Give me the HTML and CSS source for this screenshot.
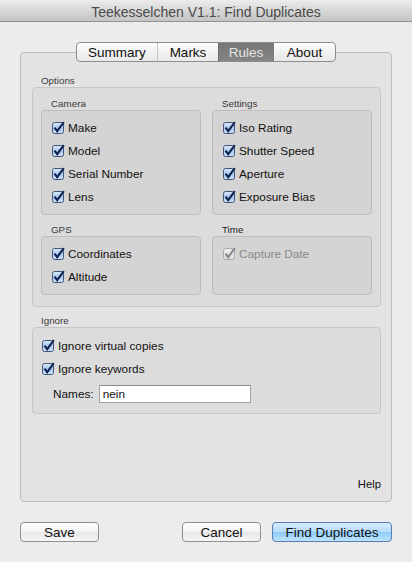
FILE: index.html
```html
<!DOCTYPE html>
<html>
<head>
<meta charset="utf-8">
<title>Teekesselchen V1.1: Find Duplicates</title>
<link rel="stylesheet" href="styles.css">
</head>
<body>
<svg class="defs" width="0" height="0">
  <defs>
    <linearGradient id="cbfill" x1="0" y1="0" x2="0" y2="1">
      <stop offset="0" stop-color="#dbe9f8"/>
      <stop offset="0.5" stop-color="#a9c9ef"/>
      <stop offset="1" stop-color="#cfe3fa"/>
    </linearGradient>
    <linearGradient id="cbdis" x1="0" y1="0" x2="0" y2="1">
      <stop offset="0" stop-color="#eeeeee"/>
      <stop offset="1" stop-color="#dcdcdc"/>
    </linearGradient>
  </defs>
</svg>
<div class="window">
  <div class="titlebar">Teekesselchen V1.1: Find Duplicates</div>

  <div class="tabs">
    <div class="seg-group">
      <div class="seg seg-summary">Summary</div>
      <div class="seg seg-marks">Marks</div>
      <div class="seg seg-rules active">Rules</div>
      <div class="seg seg-about">About</div>
    </div>
  </div>

  <div class="tabbox">
    <div class="label outer-label">Options</div>
    <div class="group options">
      <div class="grid">
        <div class="label inner-label">Camera</div>
        <div class="label inner-label">Settings</div>
        <div class="inner">
          <div class="row"><svg class="cb" viewBox="0 0 14 14"><rect x="0.5" y="1.5" width="11" height="11" rx="2" fill="url(#cbfill)" stroke="#44557a"/><path d="M2.6 6.6 L5.2 10.2 L11.8 1.2" fill="none" stroke="#0f2450" stroke-width="2.1"/></svg><span>Make</span></div>
          <div class="row"><svg class="cb" viewBox="0 0 14 14"><rect x="0.5" y="1.5" width="11" height="11" rx="2" fill="url(#cbfill)" stroke="#44557a"/><path d="M2.6 6.6 L5.2 10.2 L11.8 1.2" fill="none" stroke="#0f2450" stroke-width="2.1"/></svg><span>Model</span></div>
          <div class="row"><svg class="cb" viewBox="0 0 14 14"><rect x="0.5" y="1.5" width="11" height="11" rx="2" fill="url(#cbfill)" stroke="#44557a"/><path d="M2.6 6.6 L5.2 10.2 L11.8 1.2" fill="none" stroke="#0f2450" stroke-width="2.1"/></svg><span>Serial Number</span></div>
          <div class="row"><svg class="cb" viewBox="0 0 14 14"><rect x="0.5" y="1.5" width="11" height="11" rx="2" fill="url(#cbfill)" stroke="#44557a"/><path d="M2.6 6.6 L5.2 10.2 L11.8 1.2" fill="none" stroke="#0f2450" stroke-width="2.1"/></svg><span>Lens</span></div>
        </div>
        <div class="inner">
          <div class="row"><svg class="cb" viewBox="0 0 14 14"><rect x="0.5" y="1.5" width="11" height="11" rx="2" fill="url(#cbfill)" stroke="#44557a"/><path d="M2.6 6.6 L5.2 10.2 L11.8 1.2" fill="none" stroke="#0f2450" stroke-width="2.1"/></svg><span>Iso Rating</span></div>
          <div class="row"><svg class="cb" viewBox="0 0 14 14"><rect x="0.5" y="1.5" width="11" height="11" rx="2" fill="url(#cbfill)" stroke="#44557a"/><path d="M2.6 6.6 L5.2 10.2 L11.8 1.2" fill="none" stroke="#0f2450" stroke-width="2.1"/></svg><span>Shutter Speed</span></div>
          <div class="row"><svg class="cb" viewBox="0 0 14 14"><rect x="0.5" y="1.5" width="11" height="11" rx="2" fill="url(#cbfill)" stroke="#44557a"/><path d="M2.6 6.6 L5.2 10.2 L11.8 1.2" fill="none" stroke="#0f2450" stroke-width="2.1"/></svg><span>Aperture</span></div>
          <div class="row"><svg class="cb" viewBox="0 0 14 14"><rect x="0.5" y="1.5" width="11" height="11" rx="2" fill="url(#cbfill)" stroke="#44557a"/><path d="M2.6 6.6 L5.2 10.2 L11.8 1.2" fill="none" stroke="#0f2450" stroke-width="2.1"/></svg><span>Exposure Bias</span></div>
        </div>
        <div class="label inner-label second">GPS</div>
        <div class="label inner-label second dark">Time</div>
        <div class="inner">
          <div class="row"><svg class="cb" viewBox="0 0 14 14"><rect x="0.5" y="1.5" width="11" height="11" rx="2" fill="url(#cbfill)" stroke="#44557a"/><path d="M2.6 6.6 L5.2 10.2 L11.8 1.2" fill="none" stroke="#0f2450" stroke-width="2.1"/></svg><span>Coordinates</span></div>
          <div class="row"><svg class="cb" viewBox="0 0 14 14"><rect x="0.5" y="1.5" width="11" height="11" rx="2" fill="url(#cbfill)" stroke="#44557a"/><path d="M2.6 6.6 L5.2 10.2 L11.8 1.2" fill="none" stroke="#0f2450" stroke-width="2.1"/></svg><span>Altitude</span></div>
        </div>
        <div class="inner">
          <div class="row disabled"><svg class="cb" viewBox="0 0 14 14"><rect x="0.5" y="1.5" width="11" height="11" rx="2" fill="url(#cbdis)" stroke="#a9a9a9"/><path d="M2.6 6.6 L5.2 10.2 L11.8 1.2" fill="none" stroke="#8a8a8a" stroke-width="2.1"/></svg><span>Capture Date</span></div>
        </div>
      </div>
    </div>

    <div class="label outer-label ignore-label">Ignore</div>
    <div class="group ignorebox">
      <div class="row"><svg class="cb" viewBox="0 0 14 14"><rect x="0.5" y="1.5" width="11" height="11" rx="2" fill="url(#cbfill)" stroke="#44557a"/><path d="M2.6 6.6 L5.2 10.2 L11.8 1.2" fill="none" stroke="#0f2450" stroke-width="2.1"/></svg><span>Ignore virtual copies</span></div>
      <div class="row"><svg class="cb" viewBox="0 0 14 14"><rect x="0.5" y="1.5" width="11" height="11" rx="2" fill="url(#cbfill)" stroke="#44557a"/><path d="M2.6 6.6 L5.2 10.2 L11.8 1.2" fill="none" stroke="#0f2450" stroke-width="2.1"/></svg><span>Ignore keywords</span></div>
      <div class="names-row">
        <span>Names:</span>
        <div class="input">nein</div>
      </div>
    </div>

    <div class="help">Help</div>
  </div>

  <div class="buttons">
    <div class="btn btn-save">Save</div>
    <div class="spacer"></div>
    <div class="btn btn-cancel">Cancel</div>
    <div class="btn btn-primary">Find Duplicates</div>
  </div>
</div>
</body>
</html>
```

FILE: styles.css
```css
html, body {
  margin: 0;
  padding: 0;
}
body {
  width: 412px;
  height: 562px;
  overflow: hidden;
  background: #ececec;
  font-family: "Liberation Sans", Arial, sans-serif;
  color: #111;
}
.defs {
  display: block;
  width: 0;
  height: 0;
  overflow: hidden;
}
.window {
  display: flex;
  flex-direction: column;
  height: 562px;
}
.titlebar {
  height: 21px;
  border-bottom: 1px solid #939393;
  background: linear-gradient(#ececec, #d3d3d3 60%, #c4c4c4);
  text-align: center;
  font-size: 14px;
  line-height: 24px;
  color: #4a4a4a;
}
.tabs {
  display: flex;
  justify-content: center;
  margin-top: 20px;
  position: relative;
  z-index: 1;
}
.seg-group {
  display: flex;
  height: 20px;
  box-sizing: border-box;
  border: 1px solid #8e8e8e;
  border-radius: 4px;
  overflow: hidden;
  background: linear-gradient(#ffffff, #f1f1f1 50%, #e9e9e9);
}
.seg {
  box-sizing: border-box;
  font-size: 13.5px;
  line-height: 19px;
  text-align: center;
  color: #111;
  border-left: 1px solid #c7c7c7;
}
.seg-summary { width: 80px; border-left: none; }
.seg-marks { width: 61px; }
.seg-rules { width: 55px; }
.seg-about { width: 62px; border-left-color: #7a7a7a; }
.seg.active {
  background: linear-gradient(#767676, #858585);
  color: #e4e4e4;
  border-left-color: #6d6d6d;
}
.tabbox {
  margin: -10px 20px 0;
  height: 450px;
  box-sizing: border-box;
  border: 1px solid #bdbdbd;
  border-radius: 4px;
  background: #e3e3e3;
  padding: 22px 10px 10px 11px;
  display: flex;
  flex-direction: column;
}
.label {
  font-size: 9.8px;
  line-height: 12px;
  color: #3a3a3a;
}
.outer-label {
  padding-left: 9px;
}
.ignore-label {
  margin-top: 8px;
}
.inner-label {
  padding-left: 10px;
}
.inner-label.second {
  margin-top: 9px;
}
.inner-label.dark {
  color: #222;
}
.group {
  border: 1px solid #c6c6c6;
  border-radius: 4px;
  background: #dcdcdc;
}
.options {
  padding: 10px 8px 11px;
}
.grid {
  display: grid;
  grid-template-columns: 160px 160px;
  column-gap: 11px;
}
.inner {
  border: 1px solid #bdbdbd;
  border-radius: 4px;
  background: #d4d4d4;
  padding: 5px 0 6px 10px;
}
.row {
  display: flex;
  align-items: center;
  height: 23px;
  gap: 2px;
  font-size: 11.8px;
  color: #111;
}
.cb {
  width: 14px;
  height: 14px;
  flex: none;
}
.row.disabled {
  color: #8b8b8b;
}
.ignorebox {
  padding: 6px 9px 10px;
}
.names-row {
  display: flex;
  align-items: center;
  gap: 5px;
  height: 19px;
  margin-top: 4px;
  padding-left: 11px;
  font-size: 11.8px;
}
.input {
  width: 152px;
  height: 18px;
  box-sizing: border-box;
  background: #fff;
  border: 1px solid #a3a3a3;
  border-top-color: #8a8a8a;
  padding-left: 3px;
  line-height: 16px;
  font-size: 11.8px;
  color: #111;
}
.help {
  margin-top: auto;
  align-self: flex-end;
  font-size: 11.3px;
  line-height: 14px;
  color: #111;
}
.buttons {
  display: flex;
  margin: 20px 20px 0;
  gap: 11px;
}
.spacer {
  flex: 1;
}
.btn {
  height: 20px;
  box-sizing: border-box;
  border: 1px solid #8f8f8f;
  border-radius: 4px;
  background: linear-gradient(#ffffff, #f3f3f3 50%, #e6e6e6 51%, #f6f6f6);
  font-size: 13.5px;
  line-height: 19px;
  text-align: center;
  color: #111;
}
.btn-save, .btn-cancel {
  width: 79px;
}
.btn-primary {
  width: 120px;
  border-color: #5b7db3;
  background: linear-gradient(#d9edfd, #b3dafb 50%, #8ccaf8 51%, #bfe4fd);
}
```
